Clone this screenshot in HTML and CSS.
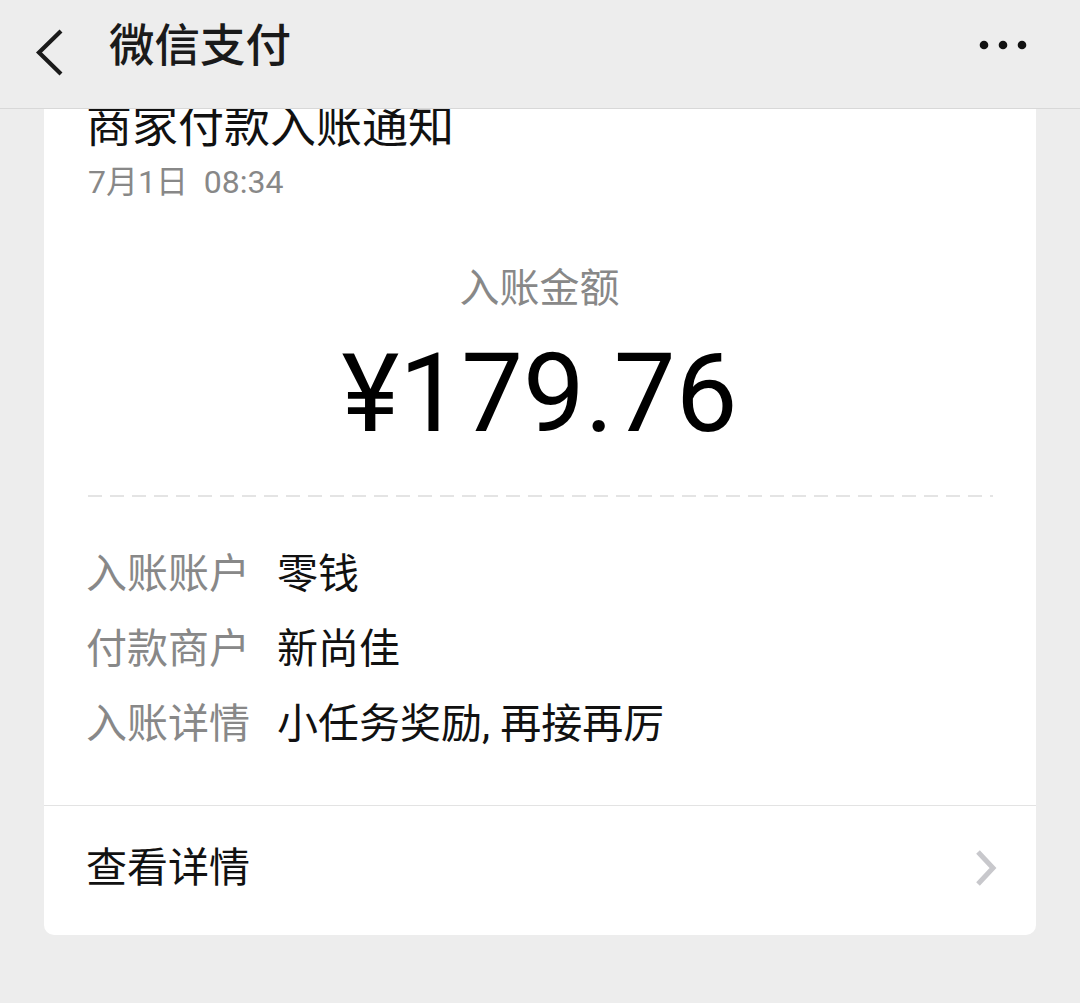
FILE: index.html
```html
<!DOCTYPE html>
<html lang="zh-CN">
<head>
<meta charset="utf-8">
<title>微信支付</title>
<link rel="stylesheet" href="styles.css">
</head>
<body>
<header class="topbar">
  <svg class="back" width="34" height="50" viewBox="0 0 34 50"><polyline points="27,3 5,24.5 27,46" fill="none" stroke="#1a1a1a" stroke-width="4.2" stroke-linecap="butt" stroke-linejoin="miter"/></svg>
  <h1 class="topbar-title">微信支付</h1>
  <svg class="more" width="50" height="12" viewBox="0 0 50 12"><circle cx="6" cy="6" r="4.3" fill="#111"/><circle cx="25" cy="6" r="4.3" fill="#111"/><circle cx="44" cy="6" r="4.3" fill="#111"/></svg>
</header>
<main class="card">
  <section class="card-body">
    <div class="title">商家付款入账通知</div>
    <div class="date">7月1日&nbsp;&nbsp;08:34</div>
    <div class="amount-label">入账金额</div>
    <div class="amount">¥179.76</div>
    <div class="dash"></div>
    <dl class="rows">
      <div class="row"><dt>入账账户</dt><dd>零钱</dd></div>
      <div class="row"><dt>付款商户</dt><dd>新尚佳</dd></div>
      <div class="row"><dt>入账详情</dt><dd>小任务奖励, 再接再厉</dd></div>
    </dl>
  </section>
  <div class="link">
    <span>查看详情</span>
    <svg class="chev" width="24" height="36" viewBox="0 0 24 36"><polyline points="4,2 19,18 4,34" fill="none" stroke="#c8c8cc" stroke-width="5"/></svg>
  </div>
</main>
</body>
</html>
```
FILE: styles.css
```css
* { box-sizing: border-box; }
html, body { margin: 0; padding: 0; }
body {
  background: #ededed;
  width: 1080px;
  height: 1003px;
  overflow: hidden;
  font-family: Roboto, "Noto Sans CJK SC", sans-serif;
  color: #111;
}
.topbar {
  position: relative;
  z-index: 2;
  height: 109px;
  background: #ededed;
  border-bottom: 1px solid #d8d8d8;
  display: flex;
  align-items: center;
  padding: 0 0 0 34px;
}
.back { flex: none; margin-top: -3px; }
.topbar-title {
  margin: -14px 0 0 41px;
  font-size: 45.5px;
  font-weight: 500;
  color: #1a1a1a;
  line-height: 50px;
  flex: 1;
}
.more { flex: none; margin-right: 52px; margin-top: -18px; }
.card {
  display: block;
  margin: -11px 44px 0;
  background: #fff;
  border-radius: 0 0 10px 10px;
}
.card-body { padding: 0 43px 43px 42px; }
.title {
  font-size: 46px;
  line-height: 56px;
  color: #111;
}
.date {
  margin-top: 8px;
  font-size: 32px;
  line-height: 40px;
  color: #888;
  padding-left: 2px;
}
.amount-label {
  margin-top: 62px;
  text-align: center;
  font-size: 40px;
  line-height: 50px;
  color: #888;
}
.amount {
  margin-top: 20px;
  text-align: center;
  font-size: 110px;
  line-height: 120px;
  color: #000;
}
.dash {
  margin-top: 41px;
  margin-left: 2px;
  height: 2px;
  background-image: linear-gradient(to right, #e4e4e4 0 14px, transparent 14px 22px);
  background-size: 22px 2px;
  background-repeat: repeat-x;
}
.rows { margin: 40px 0 0; }
.row {
  display: flex;
  gap: 27px;
  font-size: 41px;
  line-height: 75px;
}
.row dt { color: #888; }
.row dd { margin: 0; color: #111; }
.link {
  border-top: 1px solid #e3e3e3;
  display: flex;
  align-items: center;
  justify-content: space-between;
  padding: 36px 38px 41px 42px;
  font-size: 41px;
  line-height: 52px;
  color: #111;
}
.chev { flex: none; }
```
